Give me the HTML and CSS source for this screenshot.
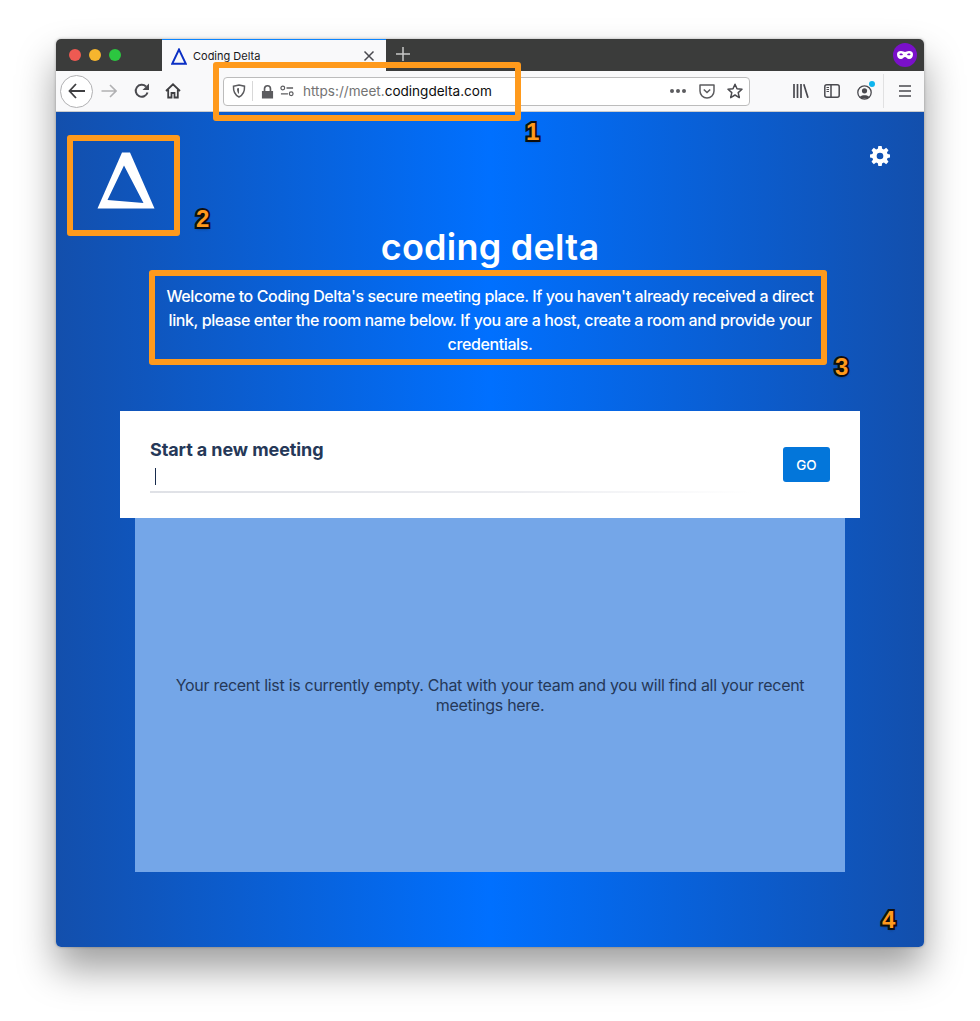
FILE: index.html
```html
<!DOCTYPE html>
<html lang="en">
<head>
    <meta charset="UTF-8">
    <meta name="viewport" content="width=device-width, initial-scale=1.0">
    <title>Coding Delta</title>
    <link rel="stylesheet" href="styles.css">
</head>
<body>
    <div class="window">
        <div class="tabbar">
            <div class="lights">
                <span class="light red"></span>
                <span class="light yellow"></span>
                <span class="light green"></span>
            </div>
            <div class="tab">
                <svg class="tab-logo" width="16" height="17" viewBox="0 0 16 17"><path d="M8 1.5 L1.2 15.8 H14.8 Z" fill="none" stroke="#0b2fc4" stroke-width="1.9"/></svg>
                <span class="tab-title">Coding Delta</span>
                <svg class="tab-close" width="12" height="12" viewBox="0 0 12 12"><path d="M1.5 1.5 L10.5 10.5 M10.5 1.5 L1.5 10.5" stroke="#4a4a4f" stroke-width="1.5"/></svg>
            </div>
            <svg class="new-tab" width="14" height="14" viewBox="0 0 14 14"><path d="M7 0 V14 M0 7 H14" stroke="#c8c8c8" stroke-width="1.5"/></svg>
            <div class="mask">
                <svg width="16" height="8" viewBox="0 0 16 8"><path d="M4 0 C6 0 7 1 8 1 C9 1 10 0 12 0 C15 0 16 1.5 16 3.5 C16 6 14.5 8 12 8 C10 8 9.5 6 8 6 C6.500 6 6 8 4 8 C1.500 8 0 6 0 3.500 C0 1.500 1 0 4 0 Z M4 2.500 C3 2.500 2.500 3 2.500 3.700 C3.500 4.500 5 4.500 6 3.700 C5.500 3 5 2.500 4 2.500 Z M12 2.500 C11 2.500 10.500 3 10 3.700 C11 4.500 12.500 4.500 13.500 3.700 C13.500 3 13 2.500 12 2.500 Z" fill="#fff" fill-rule="evenodd"/></svg>
            </div>
        </div>

        <div class="toolbar">
            <div class="back-btn">
                <svg width="18" height="16" viewBox="0 0 18 16"><path d="M8 1 L1.500 8 L8 15 M2 8 H17" fill="none" stroke="#3f3f42" stroke-width="1.800"/></svg>
            </div>
            <svg class="tool-forward" width="16" height="14" viewBox="0 0 16 14"><path d="M9 1 L15 7 L9 13 M15 7 H0.500" fill="none" stroke="#b1b1b3" stroke-width="1.600"/></svg>
            <svg class="tool-reload" width="16" height="16" viewBox="0 0 16 16"><path d="M13.500 9.500 A6 6 0 1 1 12 3.500" fill="none" stroke="#4a4a4f" stroke-width="2"/><path d="M15 0.500 V7 H8.500 Z" fill="#4a4a4f"/></svg>
            <svg class="tool-home" width="16" height="16" viewBox="0 0 16 16"><path d="M1 8 L8 1.300 L15 8 M3.200 6.800 V14.500 H6.500 V10 H9.500 V14.500 H12.800 V6.800" fill="none" stroke="#3f3f42" stroke-width="1.800"/></svg>

            <div class="urlbar">
                <svg class="url-shield" width="14" height="14" viewBox="0 0 14 14"><path d="M1.500 2.200 L7 1 L12.500 2.200 C12.800 7.500 11 11 7 13 C3 11 1.200 7.500 1.500 2.200 Z" fill="none" stroke="#5c5c5f" stroke-width="1.500"/><path d="M7 4 V10 C5.500 9 5 7 5 4.500 Z" fill="#5c5c5f"/></svg>
                <span class="url-sep"></span>
                <svg class="url-lock" width="13" height="15" viewBox="0 0 14 15"><path d="M1 7 H13 V15 H1 Z" fill="#5c5c5f"/><path d="M3.800 7 V4.500 A3.200 3.200 0 0 1 10.200 4.500 V7" fill="none" stroke="#5c5c5f" stroke-width="1.800"/></svg>
                <svg class="url-perm" width="14" height="12" viewBox="0 0 15 12"><circle cx="3" cy="2.800" r="2" fill="none" stroke="#5c5c5f" stroke-width="1.300"/><path d="M7 2.800 H14 M1 9 H8.500" stroke="#5c5c5f" stroke-width="1.400"/><circle cx="12" cy="9" r="2" fill="none" stroke="#5c5c5f" stroke-width="1.300"/></svg>
                <span class="url-text"><span class="url-dim">https://meet.</span>codingdelta.com</span>
                <span class="url-dots"><i></i><i></i><i></i></span>
                <svg class="url-pocket" width="16" height="15" viewBox="0 0 16 15"><path d="M1 1 H15 V7 A7 7 0 0 1 1 7 Z" fill="none" stroke="#5c5c5f" stroke-width="1.500" stroke-linejoin="round"/><path d="M4.800 5.500 L8 8.500 L11.200 5.500" fill="none" stroke="#5c5c5f" stroke-width="1.600"/></svg>
                <svg class="url-star" width="16" height="16" viewBox="0 0 16 16"><path d="M8 1.300 L10 5.800 L15 6.300 L11.200 9.600 L12.300 14.600 L8 12 L3.700 14.600 L4.800 9.600 L1 6.300 L6 5.800 Z" fill="none" stroke="#4a4a4f" stroke-width="1.500" stroke-linejoin="round"/></svg>
            </div>

            <svg class="tool-library" width="16" height="14" viewBox="0 0 16 14"><path d="M1 0 V14 M4.500 0 V14 M8 0 V14 M10.800 0.300 L15 13.800" fill="none" stroke="#4a4a4f" stroke-width="1.700"/></svg>
            <svg class="tool-sidebar" width="16" height="14" viewBox="0 0 16 14"><rect x="0.800" y="0.800" width="14.400" height="12.400" rx="2" fill="none" stroke="#4a4a4f" stroke-width="1.500"/><path d="M7 1 V13" stroke="#4a4a4f" stroke-width="1.500"/><path d="M2.500 3.500 H5 M2.500 5.500 H5 M2.500 7.500 H5" stroke="#4a4a4f"/></svg>
            <div class="account">
                <svg width="15" height="15" viewBox="0 0 15 15"><circle cx="7.500" cy="7.500" r="6.700" fill="none" stroke="#4a4a4f" stroke-width="1.300"/><circle cx="7.500" cy="5.800" r="2.600" fill="#4a4a4f"/><path d="M3 12 C3.500 9.500 11.500 9.500 12 12 C10 14 5 14 3 12 Z" fill="#4a4a4f"/></svg>
                <span class="account-dot"></span>
            </div>
            <span class="tool-sep"></span>
            <svg class="tool-menu" width="12" height="12" viewBox="0 0 12 12"><path d="M0 1 H12 M0 6 H12 M0 11 H12" stroke="#4a4a4f" stroke-width="1.600"/></svg>
        </div>

        <div class="content">
            <div class="header">
                <svg class="logo" width="58" height="57" viewBox="0 0 58 57"><path fill-rule="evenodd" fill="#fff" d="M25 0.500 H33 L57.500 56.500 H0.500 Z M27 13.500 L10.500 48 L46.500 51 Z"/></svg>
                <svg class="gear" width="20" height="20" viewBox="0 0 24 24"><path fill="#fff" fill-rule="evenodd" d="M10 1 H14 L14.600 4.200 L16.700 5.100 L19.400 3.200 L22.200 6 L20.300 8.700 L21.100 10.700 L24 11.200 V14.800 L21.100 15.300 L20.300 17.300 L22.200 20 L19.400 22.800 L16.700 20.900 L14.600 21.800 L14 25 H10 L9.400 21.800 L7.300 20.900 L4.600 22.800 L1.800 20 L3.700 17.300 L2.900 15.300 L0 14.800 V11.200 L2.900 10.700 L3.700 8.700 L1.800 6 L4.600 3.200 L7.300 5.100 L9.400 4.200 Z M12 9 A4 4 0 1 0 12 17 A4 4 0 1 0 12 9 Z" transform="translate(0 -1)"/></svg>
            </div>

            <h1 class="title">coding delta</h1>
            <p class="welcome">Welcome to Coding Delta's secure meeting place. If you haven't already received a direct link, please enter the room name below. If you are a host, create a room and provide your credentials.</p>

            <div class="start-card">
                <div class="start-form">
                    <div class="start-label">Start a new meeting</div>
                    <div class="start-input"><span class="caret"></span></div>
                </div>
                <button class="go-btn">GO</button>
            </div>

            <div class="recent">
                <p>Your recent list is currently empty. Chat with your team and you will find all your recent meetings here.</p>
            </div>
        </div>
    </div>

    <!-- callouts drawn over the screenshot -->
    <div class="callout box-url"></div>
    <div class="callout box-logo"></div>
    <div class="callout box-text"></div>
    <span class="num num-1">1</span>
    <span class="num num-2">2</span>
    <span class="num num-3">3</span>
    <span class="num num-4">4</span>
</body>
</html>
```

FILE: styles.css
```css
html, body {
    margin: 0;
    height: 1021px;
    overflow: hidden;
}
body {
    position: relative;
    padding: 39px 56px 0;
    box-sizing: border-box;
    background: #fff;
    font-family: Inter, "Liberation Sans", sans-serif;
}
.window {
    height: 908px;
    display: flex;
    flex-direction: column;
    border-radius: 5px;
    overflow: hidden;
    box-shadow: 0 22px 38px rgba(0,0,0,0.38), 0 0 3px rgba(0,0,0,0.3);
}

/* tab strip */
.tabbar {
    height: 32px;
    flex: none;
    display: flex;
    align-items: center;
    background: #3b3c3b;
}
.lights {
    width: 106px;
    box-sizing: border-box;
    padding-left: 13px;
    display: flex;
    gap: 8px;
}
.light {
    width: 12px;
    height: 12px;
    border-radius: 50%;
}
.light.red { background: #ee5a52; }
.light.yellow { background: #f5b52e; }
.light.green { background: #2cc640; }
.tab {
    width: 224px;
    height: 32px;
    box-sizing: border-box;
    display: flex;
    align-items: center;
    padding: 1px 11px 0 9px;
    background: #f9f9fa;
    border-top: 1px solid #0a84ff;
}
.tab-logo {
    margin-right: 6px;
}
.tab-title {
    flex: 1;
    font-size: 11px;
    color: #18181a;
}
.new-tab {
    margin: 0 0 2px 10px;
}
.mask {
    width: 24px;
    height: 24px;
    margin-left: auto;
    margin-right: 7px;
    border-radius: 50%;
    background: #7a10c9;
    display: flex;
    align-items: center;
    justify-content: center;
}

/* nav toolbar */
.toolbar {
    height: 41px;
    flex: none;
    box-sizing: border-box;
    display: flex;
    align-items: center;
    padding-left: 4px;
    background: #f9f9fa;
    border-bottom: 1px solid #ccc;
}
.back-btn {
    width: 33px;
    height: 33px;
    flex: none;
    box-sizing: border-box;
    border: 1px solid #b1b1b3;
    border-radius: 50%;
    background: #fff;
    display: flex;
    align-items: center;
    justify-content: center;
}
.tool-forward { margin-left: 8px; }
.tool-reload { margin-left: 17px; }
.tool-home { margin-left: 15px; }
.urlbar {
    width: 527px;
    height: 29px;
    flex: none;
    box-sizing: border-box;
    margin-left: 42px;
    padding-left: 8px;
    display: flex;
    align-items: center;
    background: #fff;
    border: 1px solid #bcbcbc;
    border-radius: 4px;
}
.url-sep {
    width: 1px;
    height: 20px;
    margin-left: 6px;
    background: #d8d8d8;
}
.url-lock { margin-left: 8px; }
.url-perm { margin-left: 6px; }
.url-text {
    margin-left: 9px;
    font-size: 13.55px;
    color: #0c0c0d;
}
.url-dim { color: #737373; }
.url-dots {
    margin-left: auto;
    display: flex;
    gap: 2px;
}
.url-dots i {
    width: 4px;
    height: 4px;
    border-radius: 50%;
    background: #5c5c5f;
}
.url-pocket { margin-left: 13px; }
.url-star { margin-left: 12px; margin-right: 6px; }
.tool-library { margin-left: 43px; }
.tool-sidebar { margin-left: 15px; }
.account {
    position: relative;
    width: 15px;
    height: 15px;
    margin-left: 17px;
}
.account-dot {
    position: absolute;
    top: -3px;
    right: -3px;
    width: 6px;
    height: 6px;
    border-radius: 50%;
    background: #0fb5ee;
}
.tool-sep {
    width: 1px;
    height: 34px;
    margin-left: 11px;
    background: #e1e1e2;
}
.tool-menu { margin-left: 15px; }

/* page */
.content {
    flex: 1;
    display: flex;
    flex-direction: column;
    align-items: center;
    background: linear-gradient(90deg, #134fac 0%, #0070ff 50%, #134fac 100%);
    color: #fff;
}
.header {
    align-self: stretch;
    display: flex;
    justify-content: space-between;
    align-items: flex-start;
    padding: 40px 34px 0 40.5px;
}
.gear { margin-top: -6px; }
.title {
    margin: 16px 0 0;
    font-size: 36px;
    line-height: 44px;
    font-weight: 600;
    letter-spacing: 0.25px;
}
.welcome {
    width: 660px;
    margin: 15px 0 0;
    font-size: 16px;
    line-height: 24px;
    font-weight: 500;
    letter-spacing: -0.39px;
    text-align: center;
}
.start-card {
    width: 740px;
    height: 107px;
    flex: none;
    box-sizing: border-box;
    margin-top: 55px;
    padding: 0 30px;
    display: flex;
    align-items: center;
    background: #fff;
}
.start-form {
    width: 603px;
    align-self: flex-start;
    margin-top: 27px;
}
.start-label {
    font-size: 18px;
    line-height: 24px;
    font-weight: 700;
    letter-spacing: -0.1px;
    color: #253858;
}
.start-input {
    height: 25px;
    padding: 6px 0 0 5px;
    background: linear-gradient(90deg, #dfe1e6 0%, #ebecf0 60%, rgba(235,236,240,0) 100%) no-repeat bottom / 100% 2px;
}
.caret {
    display: block;
    width: 1px;
    height: 17px;
    background: #172b4d;
}
.go-btn {
    width: 47px;
    height: 35px;
    margin-left: auto;
    padding: 0;
    border: none;
    border-radius: 3px;
    background: #0376da;
    color: #fff;
    font-family: inherit;
    font-size: 13.5px;
    font-weight: 500;
}
.recent {
    width: 710px;
    height: 354px;
    flex: none;
    box-sizing: border-box;
    padding: 0 30px;
    display: flex;
    align-items: center;
    background: #74a6e8;
    color: #253858;
    font-size: 16px;
    line-height: 20px;
    letter-spacing: -0.29px;
    text-align: center;
}

/* orange callouts */
.callout {
    position: absolute;
    box-sizing: border-box;
    border: 6px solid #ff9a1c;
    border-radius: 3px;
}
.box-url { left: 213px; top: 62px; width: 308px; height: 59px; }
.box-logo { left: 67px; top: 135px; width: 113px; height: 101px; }
.box-text { left: 149px; top: 270px; width: 678px; height: 95px; }
.num {
    position: absolute;
    font-family: "Liberation Sans", sans-serif;
    font-size: 24px;
    line-height: 24px;
    font-weight: 700;
    color: #ff9a1c;
    -webkit-text-stroke: 4px #111;
    paint-order: stroke fill;
    text-shadow: 0 2px 3px rgba(0,0,0,0.4);
}
.num-1 { left: 526px; top: 120px; }
.num-2 { left: 196px; top: 207px; }
.num-3 { left: 835px; top: 355px; }
.num-4 { left: 882px; top: 908px; }
```
